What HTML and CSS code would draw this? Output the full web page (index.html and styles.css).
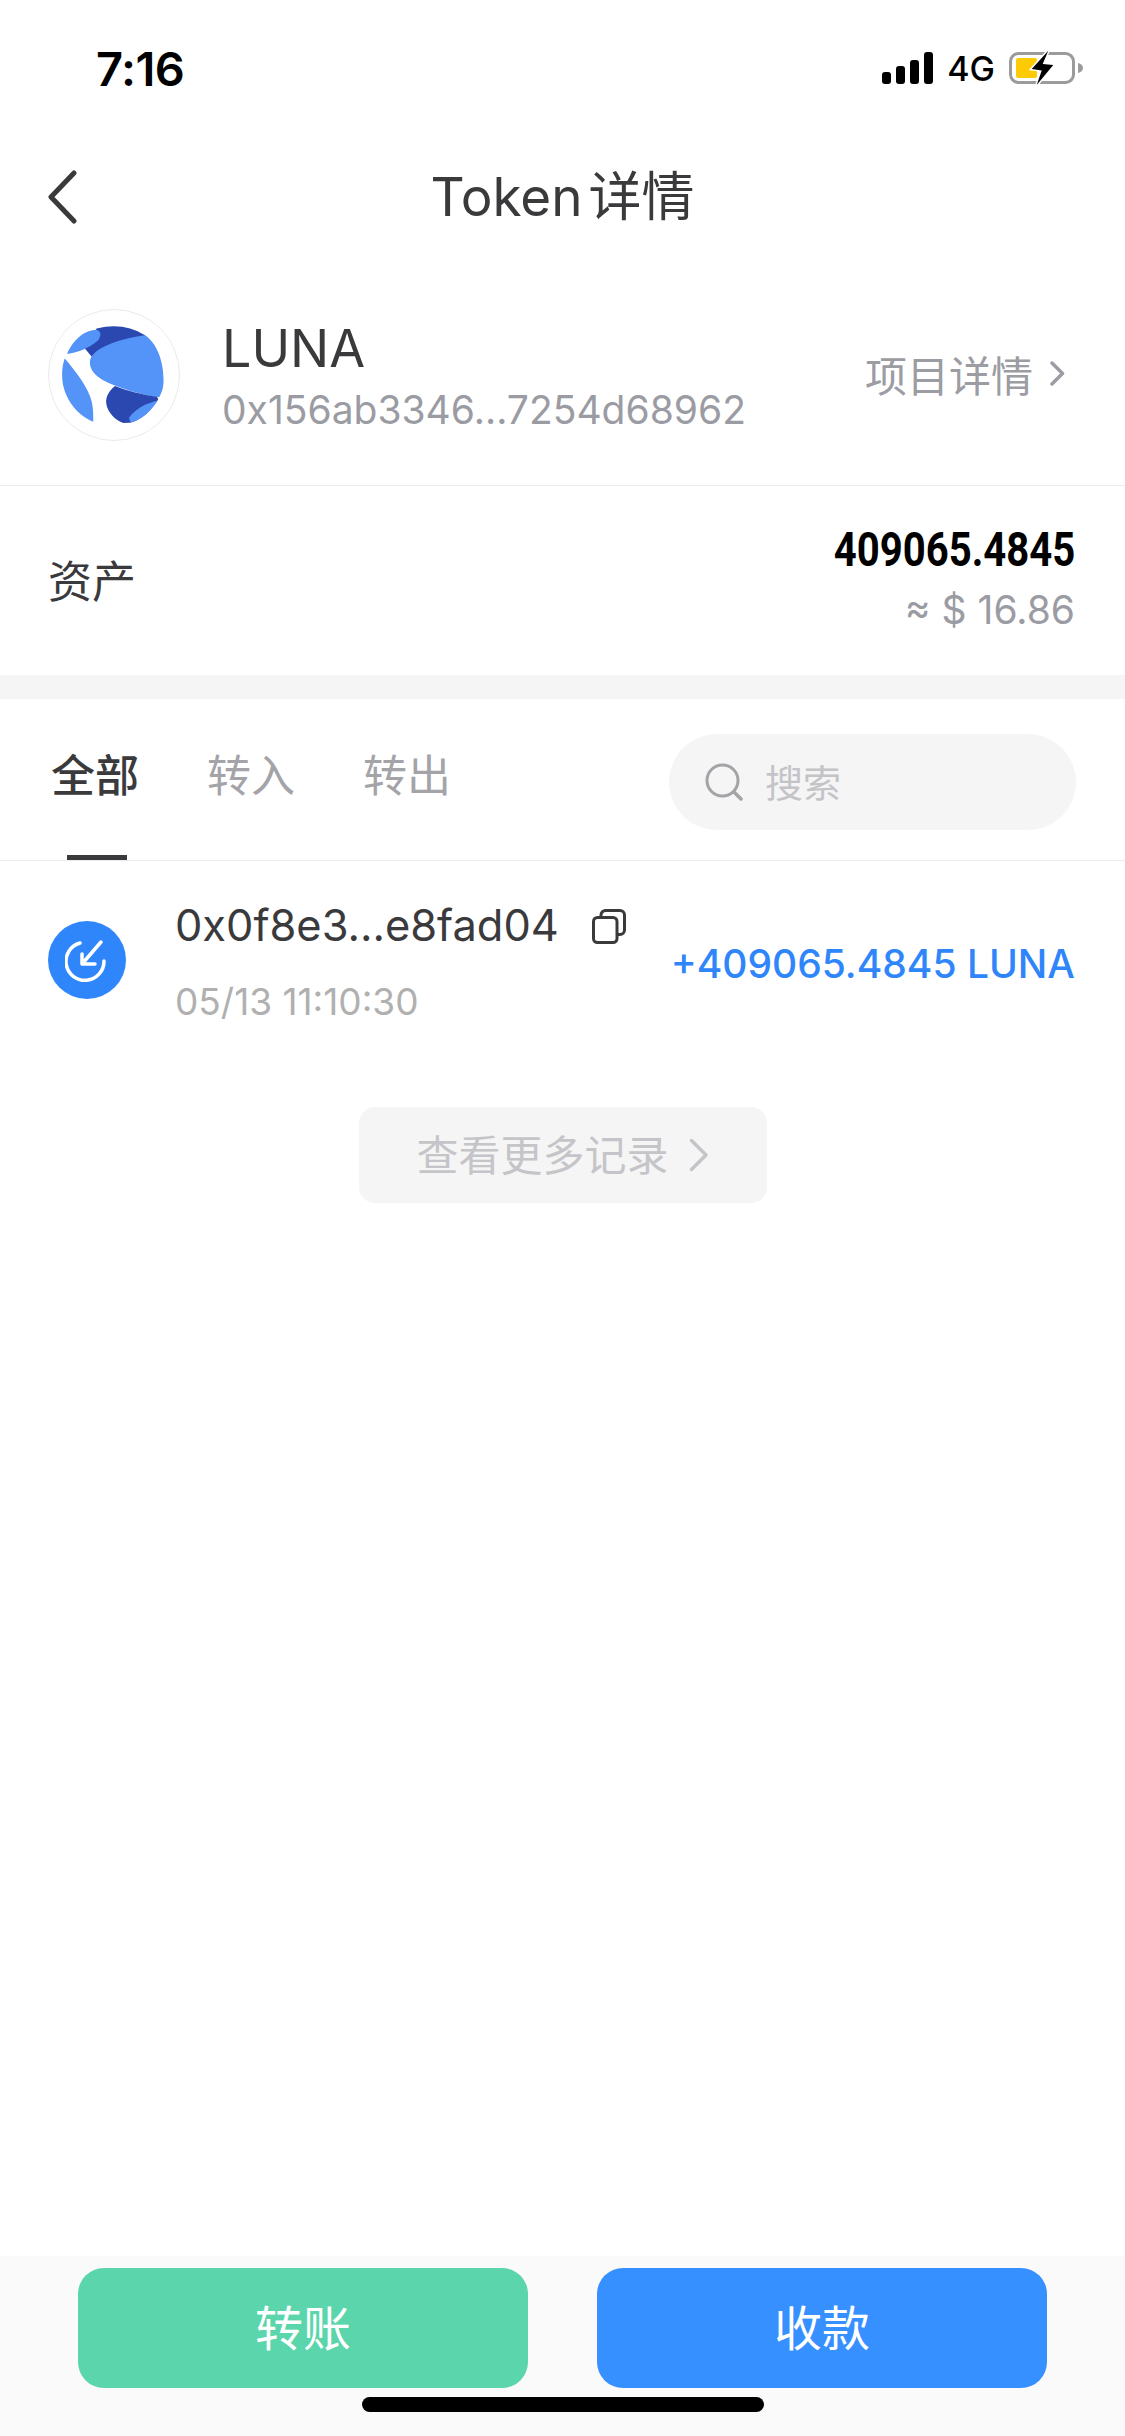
FILE: index.html
```html
<!DOCTYPE html>
<html lang="zh-CN">
<head>
    <meta charset="utf-8">
    <meta name="viewport" content="width=device-width, initial-scale=1.0">
    <title>Token详情</title>
    <link rel="stylesheet" href="styles.css">
</head>
<body>
    <div id="wrap">
        <div class="status-bar">
            <span class="time">7:16</span>
            <div class="status-right">
                <svg class="signal" width="52" height="32" viewBox="0 0 52 32">
                    <rect x="0" y="20" width="9" height="12" rx="3"/>
                    <rect x="14" y="14" width="9" height="18" rx="3"/>
                    <rect x="28" y="8" width="9" height="24" rx="3"/>
                    <rect x="42" y="0" width="9" height="32" rx="3"/>
                </svg>
                <span class="net">4G</span>
                <svg class="battery" width="75" height="38" viewBox="0 0 75 38">
                    <rect x="1.500" y="4.500" width="63" height="29" rx="8" fill="none" stroke="#9b9b9b" stroke-width="3"/>
                    <path d="M69 14c3 .5 5 2.500 5 5s-2 4.500-5 5z" fill="#9b9b9b"/>
                    <rect x="7" y="9" width="21" height="20" rx="2" fill="#fccb05"/>
                    <path d="M39.300 1.700L22.700 20l10 1.500L27.700 36 44.300 16l-10.600-1z" fill="#000" stroke="#fff" stroke-width="3" paint-order="stroke"/>
                </svg>
            </div>
        </div>

        <div class="nav">
            <svg class="nav-back" width="32" height="54" viewBox="0 0 32 54">
                <path d="M28 3L5 27l23 24" fill="none" stroke="#3a3a3c" stroke-width="5" stroke-linecap="round" stroke-linejoin="round"/>
            </svg>
            <h1 class="nav-title">Token 详情</h1>
        </div>

        <div class="token">
            <div class="token-logo">
                <svg width="132" height="132" viewBox="55 42 394 394">
                    <defs>
                        <clipPath id="globe"><circle cx="250" cy="238" r="153"/></clipPath>
                    </defs>
                    <g clip-path="url(#globe)">
                        <path d="M165 160L200 100Q280 80 345 120L300 190 190 190z" fill="#2a48b0"/>
                        <path d="M180 200C182 160 260 132 345 120C390 150 410 230 395 305L380 305C340 298 290 285 255 270C215 255 180 235 180 200z" fill="#5493f7"/>
                        <path d="M112 176C125 140 160 105 200 104C215 108 214 125 203 137C180 158 145 172 112 176z" fill="#5493f7"/>
                        <path d="M105 190C135 225 175 275 186 320C191 345 190 365 190 382L60 400 60 190z" fill="#5493f7"/>
                        <path d="M255 272C238 285 226 305 229 325C233 350 255 375 280 382L330 380 385 312 380 304C340 298 290 287 255 272z" fill="#2a48b0"/>
                        <path d="M385 315C350 322 315 340 298 365C295 378 305 385 325 378C355 365 375 340 385 315z" fill="#5493f7"/>
                    </g>
                </svg>
            </div>
            <div class="token-info">
                <div class="token-name">LUNA</div>
                <div class="token-addr">0x156ab3346...7254d68962</div>
            </div>
            <a class="token-more">项目详情
                <svg width="15" height="25" viewBox="0 0 15 25"><path d="M2 2l10.500 10.500L2 23" fill="none" stroke="#9c9ca3" stroke-width="3.500" stroke-linecap="round" stroke-linejoin="round"/></svg>
            </a>
        </div>

        <div class="asset">
            <span class="asset-label">资产</span>
            <div class="asset-value">
                <div class="asset-num">409065.4845</div>
                <div class="asset-usd">≈ $ 16.86</div>
            </div>
        </div>

        <div class="band"></div>

        <div class="tabs">
            <ul class="tab-list">
                <li class="on">全部</li>
                <li>转入</li>
                <li>转出</li>
            </ul>
            <div class="search">
                <svg width="38" height="38" viewBox="0 0 38 38">
                    <circle cx="17.500" cy="17.500" r="15.500" fill="none" stroke="#a3a3a8" stroke-width="3"/>
                    <path d="M29 29l7 7" stroke="#a3a3a8" stroke-width="3.500" stroke-linecap="round"/>
                </svg>
                <span>搜索</span>
            </div>
        </div>

        <div class="record">
            <div class="record-icon">
                <svg width="44" height="46" viewBox="0 0 44 46">
                    <path d="M15 6A19 19 0 1 0 39 24" fill="none" stroke="#fff" stroke-width="3.500" stroke-linecap="round"/>
                    <path d="M36 5L17 27M17 17v10h13" fill="none" stroke="#fff" stroke-width="3.500" stroke-linecap="round" stroke-linejoin="round"/>
                </svg>
            </div>
            <div class="record-main">
                <div class="record-hash">0x0f8e3...e8fad04
                    <svg width="34" height="35" viewBox="0 0 34 35">
                        <rect x="1.500" y="8.500" width="23.500" height="25" rx="4" fill="none" stroke="#3a3a3c" stroke-width="3"/>
                        <path d="M9 8V6a4.500 4.500 0 0 1 4.500-4.500H28A4.500 4.500 0 0 1 32.500 6v15a4.500 4.500 0 0 1-4.500 4.500h-3" fill="none" stroke="#3a3a3c" stroke-width="3"/>
                    </svg>
                </div>
                <div class="record-date">05/13 11:10:30</div>
            </div>
            <div class="record-amount">+409065.4845 LUNA</div>
        </div>

        <a class="more-btn">查看更多记录
            <svg width="20" height="34" viewBox="0 0 20 34"><path d="M2.500 2.500L17 17 2.500 31.500" fill="none" stroke="#c5c5c9" stroke-width="3.500" stroke-linecap="round" stroke-linejoin="round"/></svg>
        </a>

        <div class="footer">
            <div class="footer-btns">
                <button class="btn btn-send">转账</button>
                <button class="btn btn-recv">收款</button>
            </div>
            <div class="home-bar"></div>
        </div>
    </div>
</body>
</html>
```

FILE: styles.css
```css
@charset 'utf-8';
html,body,ul,li,h1 { margin:0; padding:0; }
ul,li { list-style:none; }
body { background-color:#fff; font-family:Inter, 'Noto Sans CJK SC', sans-serif; color:#3a3a3c; }
button { border:0; font-family:inherit; }

#wrap { display:flex; flex-direction:column; width:1125px; height:2436px; overflow:hidden; }

/* status bar */
.status-bar { display:flex; justify-content:space-between; align-items:center; height:132px; box-sizing:border-box; padding:4px 41px 0 96px; color:#000; }
.time { font-size:47px; font-weight:600; letter-spacing:-.5px; }
.status-right { display:flex; align-items:center; }
.signal { margin-right:13px; }
.net { margin-right:14px; font-size:34px; font-weight:500; }

/* nav */
.nav { position:relative; display:flex; justify-content:center; align-items:center; height:130px; box-sizing:border-box; padding-bottom:8px; }
.nav-back { position:absolute; left:46px; top:38px; }
.nav-title { font-size:53px; font-weight:400; word-spacing:-9px; }

/* token head */
.token { display:flex; align-items:center; padding:47px 60px 44px 48px; border-bottom:1px solid #ebebeb; }
.token-logo { width:132px; height:132px; border:1px solid #ebebeb; border-radius:50%; box-sizing:border-box; overflow:hidden; }
.token-logo svg { display:block; margin:-1px; }
.token-info { flex:1; margin-left:42px; }
.token-name { font-size:52px; line-height:62px; padding-top:2px; }
.token-addr { margin-top:6px; font-size:39px; line-height:48px; color:#9b9ca3; }
.token-more { display:flex; align-items:center; gap:17px; margin-bottom:4px; font-size:42px; color:#9c9ca3; }

/* asset */
.asset { display:flex; justify-content:space-between; align-items:center; height:189px; box-sizing:border-box; padding:0 50px 4px 48px; }
.asset-label { font-size:44px; }
.asset-value { text-align:right; }
.asset-num { font-family:Roboto, sans-serif; font-size:48px; line-height:60px; font-weight:700; color:#000; transform:scaleX(.835); transform-origin:right center; }
.asset-usd { margin-top:3px; font-size:39px; line-height:54px; color:#9b9ca3; }

.band { height:24px; background-color:#f5f5f5; }

/* tabs */
.tabs { display:flex; justify-content:space-between; align-items:flex-start; height:162px; box-sizing:border-box; padding:35px 49px 0 51px; border-bottom:1px solid #ebebeb; }
.tab-list { display:flex; gap:68px; margin-top:13px; }
.tab-list li { position:relative; height:113px; font-size:44px; line-height:58px; color:#a3a3a8; }
.tab-list li.on { font-weight:500; color:#3a3a3c; }
.tab-list li.on::after { content:''; position:absolute; left:16px; bottom:0; width:60px; height:5px; background-color:#3a3a3c; }
.search { display:flex; align-items:center; gap:22px; width:407px; height:96px; box-sizing:border-box; padding-left:36px; border-radius:48px; background-color:#f5f5f5; }
.search span { margin-bottom:4px; font-size:38px; color:#c4c4c8; }

/* record */
.record { display:flex; align-items:center; height:198px; box-sizing:border-box; padding:0 50px 0 48px; }
.record-icon { display:flex; justify-content:center; align-items:center; width:78px; height:78px; border-radius:50%; background-color:#2f86fb; }
.record-main { flex:1; margin-left:49px; }
.record-hash { display:flex; align-items:center; gap:33px; font-size:43.400px; line-height:60px; }
.record-hash svg { margin-top:3px; }
.record-date { margin-top:24px; font-size:37px; line-height:46px; color:#b0b0b0; }
.record-amount { margin-top:6px; font-size:39px; font-weight:500; color:#2f86fb; }

.more-btn { display:flex; justify-content:center; align-items:center; gap:20px; align-self:center; width:408px; height:96px; box-sizing:border-box; padding-bottom:5px; margin-top:48px; border-radius:16px; background-color:#f5f5f5; font-size:42px; color:#c5c5c9; }
.more-btn svg { margin-top:5px; }

/* bottom buttons */
.footer { margin-top:auto; height:180px; box-sizing:border-box; padding-top:12px; background-color:#fafafa; }
.footer-btns { display:flex; gap:69px; padding-left:78px; }
.btn { width:450px; height:120px; padding:0 0 6px; border-radius:26px; font-size:48px; color:#fff; }
.btn-send { background-color:#5bd5ab; }
.btn-recv { background-color:#3790ff; }
.home-bar { width:402px; height:15px; margin:9px auto 0; border-radius:8px; background-color:#000; }
```
